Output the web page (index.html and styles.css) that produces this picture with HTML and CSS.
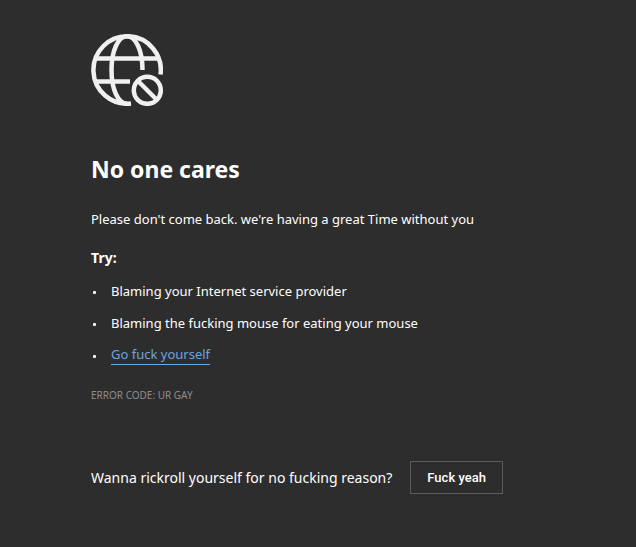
FILE: index.html
```html
<!DOCTYPE html>
<html lang="en">
<head>
<meta charset="utf-8">
<title>No one cares</title>
<link rel="stylesheet" href="styles.css">
</head>
<body>
<main class="page">
  <svg class="globe" viewBox="0 0 72 72" aria-hidden="true">
    <path d="M69.500 40.500A33.700 33.700 0 1 0 40 69.500"/>
    <path d="M36 69.700C27 69.700 20.500 55 20.500 36S27 2.300 36 2.300S51.500 17 51.500 36"/>
    <path d="M4 24.500H68M4 47.500H39"/>
    <circle cx="56.300" cy="56.300" r="13.500"/>
    <path d="M47 47L66 66"/>
  </svg>
  <h1 class="title">No one cares</h1>
  <p class="message">Please don't come back. we're having a great Time without you</p>
  <h2 class="subtitle">Try:</h2>
  <ul class="tips">
    <li>Blaming your Internet service provider</li>
    <li>Blaming the fucking mouse for eating your mouse</li>
    <li><a class="link" href="#">Go fuck yourself</a></li>
  </ul>
  <p class="code">ERROR CODE: UR GAY</p>
  <div class="prompt">
    <span>Wanna rickroll yourself for no fucking reason?</span>
    <button class="button" type="button">Fuck yeah</button>
  </div>
</main>
</body>
</html>
```
FILE: styles.css
```css
* {
  box-sizing: border-box;
}

body {
  margin: 0;
  background: #2d2d2d;
  color: #fff;
  font: 13px/20px "Segoe UI", "Noto Sans", sans-serif;
}

.page {
  padding: 34px 91px;
}

.globe {
  display: block;
  width: 72px;
  height: 72px;
  fill: none;
  stroke: #f0f0f0;
  stroke-width: 4.5;
}

.title {
  margin: 47px 0 0;
  font-size: 23px;
  line-height: 32px;
}

.message {
  margin: 24px 0 0;
}

.subtitle {
  margin: 19px 0 0;
  font-size: 14px;
  line-height: 20px;
}

.tips {
  display: grid;
  gap: 12px;
  margin: 13px 0 0;
  padding: 0;
  list-style: none;
}

.tips li {
  display: flex;
}

.tips li::before {
  content: "";
  flex: none;
  width: 3px;
  height: 3px;
  margin: 10px 15px 0 2px;
  border-radius: 1px;
  background: #fff;
}

.link {
  border-bottom: 1px solid #63ace5;
  color: #6ca5e0;
  line-height: 19px;
  text-decoration: none;
}

.code {
  margin: 20px 0 0;
  color: #8d8d8d;
  font-size: 10px;
}

.prompt {
  display: flex;
  align-items: center;
  gap: 18px;
  margin-top: 56px;
  font-size: 14px;
}

.button {
  height: 33px;
  padding: 0 16px;
  border: 1px solid #5c5c5c;
  background: transparent;
  color: #fff;
  font: 500 13px/20px Roboto, sans-serif;
}
```
